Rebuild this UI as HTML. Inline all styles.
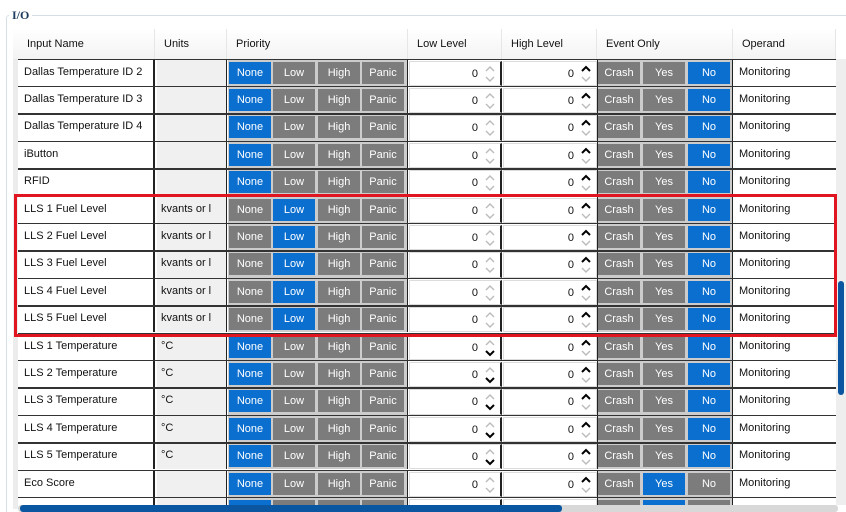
<!DOCTYPE html>
<html><head><meta charset="utf-8"><style>
*{margin:0;padding:0;box-sizing:border-box}
html,body{width:846px;height:512px;overflow:hidden}
body{background:#fff;font-family:"Liberation Sans",sans-serif;font-size:11px;color:#111;position:relative}
.fs{position:absolute;left:6px;top:15px;width:850px;height:520px;border:1px solid #d5dfe5;border-radius:3px}
.lg{position:absolute;left:9px;top:8px;background:#fff;padding:0 3px;font-size:12px;font-weight:bold;color:#1c3a5c;font-family:"Liberation Serif",serif}
.hd{position:absolute;left:13px;top:29px;width:823px;height:30px;background:linear-gradient(#fff,#f3f3f3)}
.hd div{position:absolute;top:0;height:30px;line-height:31px;padding-left:9px;border-right:1px solid #e6e6e6}
.lb{position:absolute;left:13px;top:29px;width:5px;height:480px;background:#ececec}
.r{position:absolute;left:0;width:836px;height:27.4px}
.r::before{content:"";position:absolute;left:18px;right:0;top:0;height:1.5px;background:#333;z-index:2}
.r>*{position:absolute;top:0;bottom:0}
.n{left:18px;width:137px;background:#fff;padding-left:6px;line-height:27px;border-right:2px solid #222}
.u{left:157px;width:70px;background:#f0f0f0;padding-left:4px;line-height:27px;border-right:1px solid #222}
.p{left:228px;width:180px;background:#ccc;border-right:1px solid #222}
.e{left:597px;width:136px;background:#ccc;border-left:1px solid #222;border-right:1px solid #222}
.b{position:absolute;top:3px;height:22px;width:42px;background:#7c7c7c;color:#fff;text-align:center;line-height:23px;font-size:11px}
.b.on{background:#0a6fcf}
.lv{left:409px;width:93px;background:#fff;border:1px solid #dcdcdc;border-right:2px solid #222;top:2px}
.hv{left:503px;width:94px;background:#fff;border:1px solid #dcdcdc;top:2px}
.lv span,.hv span{position:absolute;right:22px;top:6px;font-size:11px}
.lv svg,.hv svg{position:absolute;right:5px;top:3px}
.o{left:734px;width:102px;background:#fff;padding-left:5px;line-height:27px}
.red{position:absolute;left:14px;top:194px;width:823px;height:143px;border:3px solid #e0151f;z-index:5}
.vs{position:absolute;left:836px;top:59px;width:10px;height:446px;background:#eee}
.vt{position:absolute;left:838px;top:281px;width:6px;height:114px;background:#0a56a0;border-radius:3px}
.hs{position:absolute;left:18px;top:505px;width:820px;height:7px;background:#d8d8d8;border-radius:3px;z-index:6}
.ht{position:absolute;left:20px;top:505px;width:542px;height:7px;background:#0a56a0;border-radius:3px;z-index:7}
</style></head><body>
<div class="fs"></div><div class="lg">I/O</div>
<div class="lb"></div>
<div class="hd">
<div style="left:5px;width:137px">Input Name</div>
<div style="left:142px;width:72px">Units</div>
<div style="left:214px;width:181px">Priority</div>
<div style="left:395px;width:94px">Low Level</div>
<div style="left:489px;width:95px">High Level</div>
<div style="left:584px;width:136px">Event Only</div>
<div style="left:720px;width:103px">Operand</div>
</div>

<div id="rows">
<div class="r" style="top:58.5px"><div class="n">Dallas Temperature ID 2</div><div class="u"></div><div class="p"><div class="b on" style="left:1px">None</div><div class="b" style="left:45px">Low</div><div class="b" style="left:90px">High</div><div class="b" style="left:134px">Panic</div></div><div class="lv"><span>0</span><svg width="10" height="18"><polyline points="1,6 5,2 9,6" fill="none" stroke="#bbb" stroke-width="1.4"/><polyline points="1,12 5,16 9,12" fill="none" stroke="#bbb" stroke-width="1.4"/></svg></div><div class="hv"><span>0</span><svg width="10" height="18"><polyline points="1,6 5,2 9,6" fill="none" stroke="#000" stroke-width="2"/><polyline points="1,12 5,16 9,12" fill="none" stroke="#bbb" stroke-width="1.4"/></svg></div><div class="e"><div class="b" style="left:0">Crash</div><div class="b" style="left:45px">Yes</div><div class="b on" style="left:90px">No</div></div><div class="o">Monitoring</div></div>

<div class="r" style="top:85.9px"><div class="n">Dallas Temperature ID 3</div><div class="u"></div><div class="p"><div class="b on" style="left:1px">None</div><div class="b" style="left:45px">Low</div><div class="b" style="left:90px">High</div><div class="b" style="left:134px">Panic</div></div><div class="lv"><span>0</span><svg width="10" height="18"><polyline points="1,6 5,2 9,6" fill="none" stroke="#bbb" stroke-width="1.4"/><polyline points="1,12 5,16 9,12" fill="none" stroke="#bbb" stroke-width="1.4"/></svg></div><div class="hv"><span>0</span><svg width="10" height="18"><polyline points="1,6 5,2 9,6" fill="none" stroke="#000" stroke-width="2"/><polyline points="1,12 5,16 9,12" fill="none" stroke="#bbb" stroke-width="1.4"/></svg></div><div class="e"><div class="b" style="left:0">Crash</div><div class="b" style="left:45px">Yes</div><div class="b on" style="left:90px">No</div></div><div class="o">Monitoring</div></div>

<div class="r" style="top:113.3px"><div class="n">Dallas Temperature ID 4</div><div class="u"></div><div class="p"><div class="b on" style="left:1px">None</div><div class="b" style="left:45px">Low</div><div class="b" style="left:90px">High</div><div class="b" style="left:134px">Panic</div></div><div class="lv"><span>0</span><svg width="10" height="18"><polyline points="1,6 5,2 9,6" fill="none" stroke="#bbb" stroke-width="1.4"/><polyline points="1,12 5,16 9,12" fill="none" stroke="#bbb" stroke-width="1.4"/></svg></div><div class="hv"><span>0</span><svg width="10" height="18"><polyline points="1,6 5,2 9,6" fill="none" stroke="#000" stroke-width="2"/><polyline points="1,12 5,16 9,12" fill="none" stroke="#bbb" stroke-width="1.4"/></svg></div><div class="e"><div class="b" style="left:0">Crash</div><div class="b" style="left:45px">Yes</div><div class="b on" style="left:90px">No</div></div><div class="o">Monitoring</div></div>

<div class="r" style="top:140.7px"><div class="n">iButton</div><div class="u"></div><div class="p"><div class="b on" style="left:1px">None</div><div class="b" style="left:45px">Low</div><div class="b" style="left:90px">High</div><div class="b" style="left:134px">Panic</div></div><div class="lv"><span>0</span><svg width="10" height="18"><polyline points="1,6 5,2 9,6" fill="none" stroke="#bbb" stroke-width="1.4"/><polyline points="1,12 5,16 9,12" fill="none" stroke="#bbb" stroke-width="1.4"/></svg></div><div class="hv"><span>0</span><svg width="10" height="18"><polyline points="1,6 5,2 9,6" fill="none" stroke="#000" stroke-width="2"/><polyline points="1,12 5,16 9,12" fill="none" stroke="#bbb" stroke-width="1.4"/></svg></div><div class="e"><div class="b" style="left:0">Crash</div><div class="b" style="left:45px">Yes</div><div class="b on" style="left:90px">No</div></div><div class="o">Monitoring</div></div>

<div class="r" style="top:168.1px"><div class="n">RFID</div><div class="u"></div><div class="p"><div class="b on" style="left:1px">None</div><div class="b" style="left:45px">Low</div><div class="b" style="left:90px">High</div><div class="b" style="left:134px">Panic</div></div><div class="lv"><span>0</span><svg width="10" height="18"><polyline points="1,6 5,2 9,6" fill="none" stroke="#bbb" stroke-width="1.4"/><polyline points="1,12 5,16 9,12" fill="none" stroke="#bbb" stroke-width="1.4"/></svg></div><div class="hv"><span>0</span><svg width="10" height="18"><polyline points="1,6 5,2 9,6" fill="none" stroke="#000" stroke-width="2"/><polyline points="1,12 5,16 9,12" fill="none" stroke="#bbb" stroke-width="1.4"/></svg></div><div class="e"><div class="b" style="left:0">Crash</div><div class="b" style="left:45px">Yes</div><div class="b on" style="left:90px">No</div></div><div class="o">Monitoring</div></div>

<div class="r" style="top:195.5px"><div class="n">LLS 1 Fuel Level</div><div class="u">kvants or l</div><div class="p"><div class="b" style="left:1px">None</div><div class="b on" style="left:45px">Low</div><div class="b" style="left:90px">High</div><div class="b" style="left:134px">Panic</div></div><div class="lv"><span>0</span><svg width="10" height="18"><polyline points="1,6 5,2 9,6" fill="none" stroke="#bbb" stroke-width="1.4"/><polyline points="1,12 5,16 9,12" fill="none" stroke="#bbb" stroke-width="1.4"/></svg></div><div class="hv"><span>0</span><svg width="10" height="18"><polyline points="1,6 5,2 9,6" fill="none" stroke="#000" stroke-width="2"/><polyline points="1,12 5,16 9,12" fill="none" stroke="#bbb" stroke-width="1.4"/></svg></div><div class="e"><div class="b" style="left:0">Crash</div><div class="b" style="left:45px">Yes</div><div class="b on" style="left:90px">No</div></div><div class="o">Monitoring</div></div>

<div class="r" style="top:222.9px"><div class="n">LLS 2 Fuel Level</div><div class="u">kvants or l</div><div class="p"><div class="b" style="left:1px">None</div><div class="b on" style="left:45px">Low</div><div class="b" style="left:90px">High</div><div class="b" style="left:134px">Panic</div></div><div class="lv"><span>0</span><svg width="10" height="18"><polyline points="1,6 5,2 9,6" fill="none" stroke="#bbb" stroke-width="1.4"/><polyline points="1,12 5,16 9,12" fill="none" stroke="#bbb" stroke-width="1.4"/></svg></div><div class="hv"><span>0</span><svg width="10" height="18"><polyline points="1,6 5,2 9,6" fill="none" stroke="#000" stroke-width="2"/><polyline points="1,12 5,16 9,12" fill="none" stroke="#bbb" stroke-width="1.4"/></svg></div><div class="e"><div class="b" style="left:0">Crash</div><div class="b" style="left:45px">Yes</div><div class="b on" style="left:90px">No</div></div><div class="o">Monitoring</div></div>

<div class="r" style="top:250.3px"><div class="n">LLS 3 Fuel Level</div><div class="u">kvants or l</div><div class="p"><div class="b" style="left:1px">None</div><div class="b on" style="left:45px">Low</div><div class="b" style="left:90px">High</div><div class="b" style="left:134px">Panic</div></div><div class="lv"><span>0</span><svg width="10" height="18"><polyline points="1,6 5,2 9,6" fill="none" stroke="#bbb" stroke-width="1.4"/><polyline points="1,12 5,16 9,12" fill="none" stroke="#bbb" stroke-width="1.4"/></svg></div><div class="hv"><span>0</span><svg width="10" height="18"><polyline points="1,6 5,2 9,6" fill="none" stroke="#000" stroke-width="2"/><polyline points="1,12 5,16 9,12" fill="none" stroke="#bbb" stroke-width="1.4"/></svg></div><div class="e"><div class="b" style="left:0">Crash</div><div class="b" style="left:45px">Yes</div><div class="b on" style="left:90px">No</div></div><div class="o">Monitoring</div></div>

<div class="r" style="top:277.7px"><div class="n">LLS 4 Fuel Level</div><div class="u">kvants or l</div><div class="p"><div class="b" style="left:1px">None</div><div class="b on" style="left:45px">Low</div><div class="b" style="left:90px">High</div><div class="b" style="left:134px">Panic</div></div><div class="lv"><span>0</span><svg width="10" height="18"><polyline points="1,6 5,2 9,6" fill="none" stroke="#bbb" stroke-width="1.4"/><polyline points="1,12 5,16 9,12" fill="none" stroke="#bbb" stroke-width="1.4"/></svg></div><div class="hv"><span>0</span><svg width="10" height="18"><polyline points="1,6 5,2 9,6" fill="none" stroke="#000" stroke-width="2"/><polyline points="1,12 5,16 9,12" fill="none" stroke="#bbb" stroke-width="1.4"/></svg></div><div class="e"><div class="b" style="left:0">Crash</div><div class="b" style="left:45px">Yes</div><div class="b on" style="left:90px">No</div></div><div class="o">Monitoring</div></div>

<div class="r" style="top:305.1px"><div class="n">LLS 5 Fuel Level</div><div class="u">kvants or l</div><div class="p"><div class="b" style="left:1px">None</div><div class="b on" style="left:45px">Low</div><div class="b" style="left:90px">High</div><div class="b" style="left:134px">Panic</div></div><div class="lv"><span>0</span><svg width="10" height="18"><polyline points="1,6 5,2 9,6" fill="none" stroke="#bbb" stroke-width="1.4"/><polyline points="1,12 5,16 9,12" fill="none" stroke="#bbb" stroke-width="1.4"/></svg></div><div class="hv"><span>0</span><svg width="10" height="18"><polyline points="1,6 5,2 9,6" fill="none" stroke="#000" stroke-width="2"/><polyline points="1,12 5,16 9,12" fill="none" stroke="#bbb" stroke-width="1.4"/></svg></div><div class="e"><div class="b" style="left:0">Crash</div><div class="b" style="left:45px">Yes</div><div class="b on" style="left:90px">No</div></div><div class="o">Monitoring</div></div>

<div class="r" style="top:332.5px"><div class="n">LLS 1 Temperature</div><div class="u">°C</div><div class="p"><div class="b on" style="left:1px">None</div><div class="b" style="left:45px">Low</div><div class="b" style="left:90px">High</div><div class="b" style="left:134px">Panic</div></div><div class="lv"><span>0</span><svg width="10" height="18"><polyline points="1,6 5,2 9,6" fill="none" stroke="#bbb" stroke-width="1.4"/><polyline points="1,12 5,16 9,12" fill="none" stroke="#000" stroke-width="2"/></svg></div><div class="hv"><span>0</span><svg width="10" height="18"><polyline points="1,6 5,2 9,6" fill="none" stroke="#000" stroke-width="2"/><polyline points="1,12 5,16 9,12" fill="none" stroke="#bbb" stroke-width="1.4"/></svg></div><div class="e"><div class="b" style="left:0">Crash</div><div class="b" style="left:45px">Yes</div><div class="b on" style="left:90px">No</div></div><div class="o">Monitoring</div></div>

<div class="r" style="top:359.9px"><div class="n">LLS 2 Temperature</div><div class="u">°C</div><div class="p"><div class="b on" style="left:1px">None</div><div class="b" style="left:45px">Low</div><div class="b" style="left:90px">High</div><div class="b" style="left:134px">Panic</div></div><div class="lv"><span>0</span><svg width="10" height="18"><polyline points="1,6 5,2 9,6" fill="none" stroke="#bbb" stroke-width="1.4"/><polyline points="1,12 5,16 9,12" fill="none" stroke="#000" stroke-width="2"/></svg></div><div class="hv"><span>0</span><svg width="10" height="18"><polyline points="1,6 5,2 9,6" fill="none" stroke="#000" stroke-width="2"/><polyline points="1,12 5,16 9,12" fill="none" stroke="#bbb" stroke-width="1.4"/></svg></div><div class="e"><div class="b" style="left:0">Crash</div><div class="b" style="left:45px">Yes</div><div class="b on" style="left:90px">No</div></div><div class="o">Monitoring</div></div>

<div class="r" style="top:387.3px"><div class="n">LLS 3 Temperature</div><div class="u">°C</div><div class="p"><div class="b on" style="left:1px">None</div><div class="b" style="left:45px">Low</div><div class="b" style="left:90px">High</div><div class="b" style="left:134px">Panic</div></div><div class="lv"><span>0</span><svg width="10" height="18"><polyline points="1,6 5,2 9,6" fill="none" stroke="#bbb" stroke-width="1.4"/><polyline points="1,12 5,16 9,12" fill="none" stroke="#000" stroke-width="2"/></svg></div><div class="hv"><span>0</span><svg width="10" height="18"><polyline points="1,6 5,2 9,6" fill="none" stroke="#000" stroke-width="2"/><polyline points="1,12 5,16 9,12" fill="none" stroke="#bbb" stroke-width="1.4"/></svg></div><div class="e"><div class="b" style="left:0">Crash</div><div class="b" style="left:45px">Yes</div><div class="b on" style="left:90px">No</div></div><div class="o">Monitoring</div></div>

<div class="r" style="top:414.7px"><div class="n">LLS 4 Temperature</div><div class="u">°C</div><div class="p"><div class="b on" style="left:1px">None</div><div class="b" style="left:45px">Low</div><div class="b" style="left:90px">High</div><div class="b" style="left:134px">Panic</div></div><div class="lv"><span>0</span><svg width="10" height="18"><polyline points="1,6 5,2 9,6" fill="none" stroke="#bbb" stroke-width="1.4"/><polyline points="1,12 5,16 9,12" fill="none" stroke="#000" stroke-width="2"/></svg></div><div class="hv"><span>0</span><svg width="10" height="18"><polyline points="1,6 5,2 9,6" fill="none" stroke="#000" stroke-width="2"/><polyline points="1,12 5,16 9,12" fill="none" stroke="#bbb" stroke-width="1.4"/></svg></div><div class="e"><div class="b" style="left:0">Crash</div><div class="b" style="left:45px">Yes</div><div class="b on" style="left:90px">No</div></div><div class="o">Monitoring</div></div>

<div class="r" style="top:442.1px"><div class="n">LLS 5 Temperature</div><div class="u">°C</div><div class="p"><div class="b on" style="left:1px">None</div><div class="b" style="left:45px">Low</div><div class="b" style="left:90px">High</div><div class="b" style="left:134px">Panic</div></div><div class="lv"><span>0</span><svg width="10" height="18"><polyline points="1,6 5,2 9,6" fill="none" stroke="#bbb" stroke-width="1.4"/><polyline points="1,12 5,16 9,12" fill="none" stroke="#000" stroke-width="2"/></svg></div><div class="hv"><span>0</span><svg width="10" height="18"><polyline points="1,6 5,2 9,6" fill="none" stroke="#000" stroke-width="2"/><polyline points="1,12 5,16 9,12" fill="none" stroke="#bbb" stroke-width="1.4"/></svg></div><div class="e"><div class="b" style="left:0">Crash</div><div class="b" style="left:45px">Yes</div><div class="b on" style="left:90px">No</div></div><div class="o">Monitoring</div></div>

<div class="r" style="top:469.5px"><div class="n">Eco Score</div><div class="u"></div><div class="p"><div class="b on" style="left:1px">None</div><div class="b" style="left:45px">Low</div><div class="b" style="left:90px">High</div><div class="b" style="left:134px">Panic</div></div><div class="lv"><span>0</span><svg width="10" height="18"><polyline points="1,6 5,2 9,6" fill="none" stroke="#bbb" stroke-width="1.4"/><polyline points="1,12 5,16 9,12" fill="none" stroke="#bbb" stroke-width="1.4"/></svg></div><div class="hv"><span>0</span><svg width="10" height="18"><polyline points="1,6 5,2 9,6" fill="none" stroke="#000" stroke-width="2"/><polyline points="1,12 5,16 9,12" fill="none" stroke="#bbb" stroke-width="1.4"/></svg></div><div class="e"><div class="b" style="left:0">Crash</div><div class="b on" style="left:45px">Yes</div><div class="b" style="left:90px">No</div></div><div class="o">Monitoring</div></div>

<div class="r" style="top:496.9px"><div class="n"></div><div class="u"></div><div class="p"><div class="b on" style="left:1px"></div><div class="b" style="left:45px"></div><div class="b" style="left:90px"></div><div class="b" style="left:134px"></div></div><div class="lv"></div><div class="hv"></div><div class="e"><div class="b" style="left:0"></div><div class="b on" style="left:45px"></div><div class="b" style="left:90px"></div></div><div class="o"></div></div>
</div>

<div class="red"></div>
<div class="vs"></div><div class="vt"></div>
<div class="hs"></div><div class="ht"></div>
</body></html>
